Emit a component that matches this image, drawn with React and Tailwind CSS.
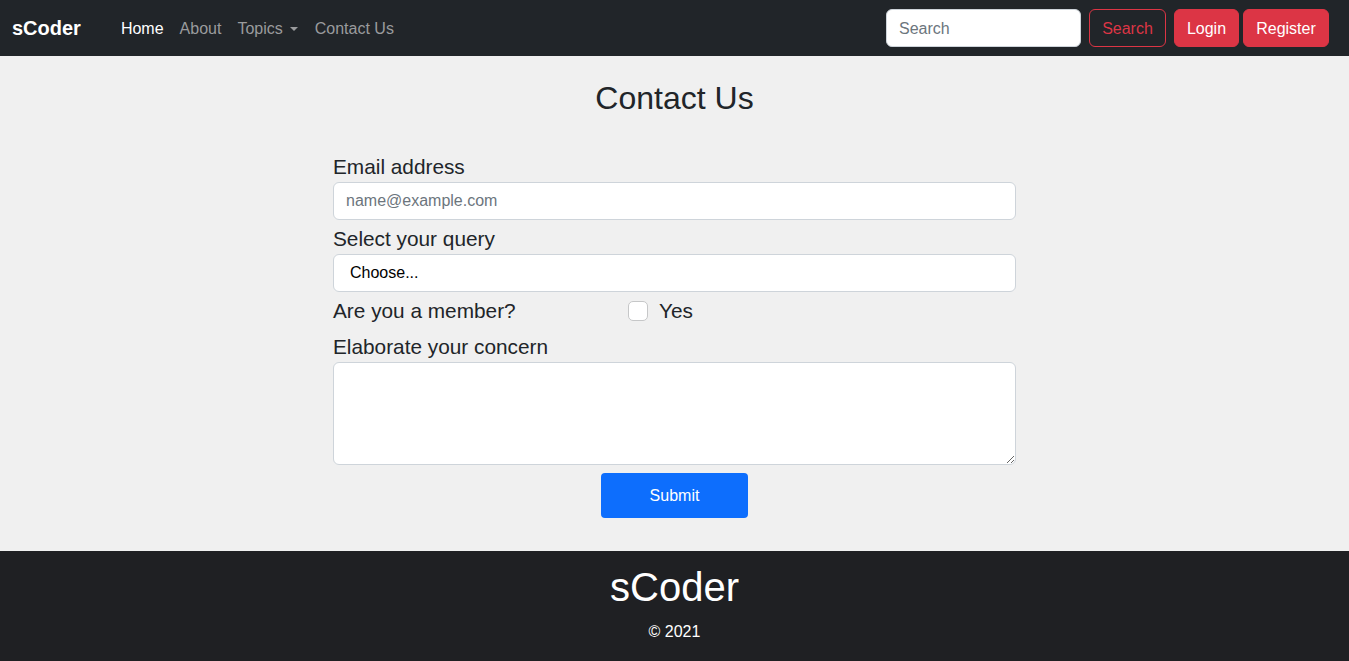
import React from "react";

export default function App() {
  const font = { fontFamily: '"Liberation Sans", Arial, sans-serif' };
  return (
    <div style={font} className="min-h-[661px] bg-[#f0f0f0] text-[#212529] flex flex-col">
      <nav className="h-[56px] bg-[#212529] flex items-center pl-3 pr-5 shrink-0">
        <span className="text-white text-[20px] font-bold leading-[30px]">sCoder</span>
        <ul className="flex items-center ml-[32px] text-[16px] leading-[24px] pt-[2px]">
          <li className="px-2 text-white">Home</li>
          <li className="px-2 text-[#9a9b9d]">About</li>
          <li className="px-2 text-[#9a9b9d] flex items-center">
            Topics
            <span className="ml-[7px] inline-block w-0 h-0 border-l-[4px] border-r-[4px] border-t-[4px] border-l-transparent border-r-transparent border-t-[#9a9b9d]"></span>
          </li>
          <li className="px-2 ml-[1px] text-[#9a9b9d]">Contact Us</li>
        </ul>
        <div className="ml-auto flex items-center">
          <input
            type="search"
            placeholder="Search"
            className="w-[195px] h-[38px] rounded-[6px] bg-white border border-[#ced4da] px-3 pt-[1px] text-[16px] text-[#212529] placeholder:text-[#6c757d] outline-none"
          />
          <button className="ml-2 h-[38px] w-[77px] pt-[1px] rounded-[6px] border border-[#dc3545] text-[#dc3545] text-[16px] bg-transparent">
            Search
          </button>
          <button className="ml-2 h-[38px] w-[65px] pt-[1px] rounded-[6px] border border-[#dc3545] bg-[#dc3545] text-white text-[16px]">
            Login
          </button>
          <button className="ml-1 h-[38px] w-[86px] pt-[1px] rounded-[6px] border border-[#dc3545] bg-[#dc3545] text-white text-[16px]">
            Register
          </button>
        </div>
      </nav>

      <main className="flex-1 flex flex-col items-center">
        <h2 className="mt-[23px] text-[32px] leading-[38px] h-[38px] font-normal">Contact Us</h2>
        <form className="w-[683px] mt-[35px] flex flex-col" onSubmit={(e) => e.preventDefault()}>
          <label className="block text-[20.8px] leading-[30px] h-[30px]">Email address</label>
          <input
            type="email"
            placeholder="name@example.com"
            className="h-[38px] w-full rounded-[6px] bg-white border border-[#ced4da] px-3 text-[16px] placeholder:text-[#6c757d] outline-none"
          />
          <label className="block mt-1 text-[20.8px] leading-[30px] h-[30px]">Select your query</label>
          <select className="h-[38px] w-full appearance-none rounded-[6px] bg-white border border-[#ced4da] pl-4 text-[16px] text-black outline-none">
            <option>Choose...</option>
            <option>General</option>
            <option>Support</option>
          </select>
          <div className="mt-1 h-[30px] flex items-center">
            <span className="w-[295px] text-[20.8px] leading-[30px]">Are you a member?</span>
            <span className="w-[20px] h-[20px] rounded-[5px] bg-white border border-[#c6c7c8]"></span>
            <span className="ml-[11px] text-[20.8px] leading-[30px]">Yes</span>
          </div>
          <label className="block mt-[6px] text-[20.8px] leading-[30px] h-[30px]">Elaborate your concern</label>
          <textarea className="h-[103px] w-full rounded-[6px] bg-white border border-[#ced4da] px-3 py-2 text-[16px] outline-none block"></textarea>
          <div className="flex justify-center mt-2">
            <button type="submit" className="w-[147px] h-[45px] rounded-[4px] bg-[#0d6efd] text-white text-[16px]">
              Submit
            </button>
          </div>
        </form>
      </main>

      <footer className="mt-[33px] bg-[#1f2023] text-white flex flex-col items-center pt-[12px] pb-[17px] shrink-0">
        <div className="text-[40px] leading-[48px]">sCoder</div>
        <div className="mt-[9px] text-[16px] leading-[24px]">© 2021</div>
      </footer>
    </div>
  );
}
